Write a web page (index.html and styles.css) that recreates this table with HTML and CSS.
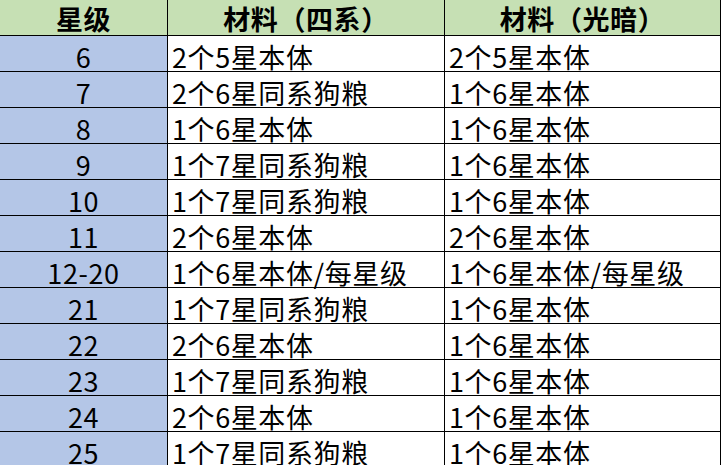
FILE: index.html
```html
<!DOCTYPE html>
<html lang="zh">
<head>
<meta charset="utf-8">
<link rel="stylesheet" href="styles.css">
</head>
<body>
<table class="sheet">
  <colgroup>
    <col class="c1"><col class="c2"><col class="c3">
  </colgroup>
  <thead>
    <tr class="head">
      <th>星级</th><th>材料（四系）</th><th>材料（光暗）</th>
    </tr>
  </thead>
  <tbody>
    <tr><td class="lvl">6</td><td>2个5星本体</td><td>2个5星本体</td></tr>
    <tr><td class="lvl">7</td><td>2个6星同系狗粮</td><td>1个6星本体</td></tr>
    <tr><td class="lvl">8</td><td>1个6星本体</td><td>1个6星本体</td></tr>
    <tr><td class="lvl">9</td><td>1个7星同系狗粮</td><td>1个6星本体</td></tr>
    <tr><td class="lvl">10</td><td>1个7星同系狗粮</td><td>1个6星本体</td></tr>
    <tr><td class="lvl">11</td><td>2个6星本体</td><td>2个6星本体</td></tr>
    <tr><td class="lvl">12-20</td><td>1个6星本体/每星级</td><td>1个6星本体/每星级</td></tr>
    <tr><td class="lvl">21</td><td>1个7星同系狗粮</td><td>1个6星本体</td></tr>
    <tr><td class="lvl">22</td><td>2个6星本体</td><td>1个6星本体</td></tr>
    <tr><td class="lvl">23</td><td>1个7星同系狗粮</td><td>1个6星本体</td></tr>
    <tr><td class="lvl">24</td><td>2个6星本体</td><td>1个6星本体</td></tr>
    <tr><td class="lvl">25</td><td>1个7星同系狗粮</td><td>1个6星本体</td></tr>
  </tbody>
</table>
</body>
</html>
```
FILE: styles.css
```css
html, body {
  margin: 0;
  padding: 0;
  background: #ffffff;
  overflow: hidden;
}
.sheet {
  border-collapse: separate;
  border-spacing: 0;
  table-layout: fixed;
  width: 721px;
  font-family: "Noto Sans CJK SC", "Noto Sans", sans-serif;
  font-size: 27px;
  color: #000;
}
.c1 { width: 168px; }
.c2 { width: 277px; }
.c3 { width: 276px; }
.sheet th, .sheet td {
  height: 36px;
  padding: 6px 0 0 4px;
  border-right: 1px solid #000;
  border-bottom: 1px solid #000;
  box-sizing: border-box;
  line-height: 29px;
  vertical-align: top;
  white-space: nowrap;
  text-align: left;
  letter-spacing: 0.6px;
}
.head th {
  padding: 4px 0 0 0;
  background: #c6e0b4;
  font-weight: bold;
  text-align: center;
}
.sheet td.lvl {
  background: #b4c6e7;
  text-align: center;
  padding-left: 0;
}
```
